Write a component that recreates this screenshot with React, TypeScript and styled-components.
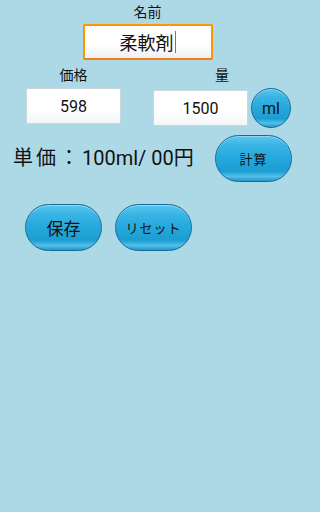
import React from "react";
import styled, { createGlobalStyle } from "styled-components";

const GlobalStyle = createGlobalStyle`
  html, body {
    margin: 0;
    padding: 0;
    background: #add8e6;
  }
  body {
    font-family: Roboto, "Noto Sans CJK JP", sans-serif;
    color: #111;
  }
`;

const Screen = styled.div`
  width: 295px;
  height: 512px;
  background: #add8e6;
  display: flex;
  flex-direction: column;
`;

const NameSection = styled.div`
  display: flex;
  flex-direction: column;
  align-items: center;
  padding-top: 3px;
`;

const Label = styled.div`
  font-size: 14px;
  line-height: 18px;
  text-align: center;
  color: #111;
`;

const NameBox = styled.div`
  margin-top: 3px;
  width: 130px;
  height: 36px;
  box-sizing: border-box;
  border: 2px solid #ff9500;
  border-bottom-color: #f0801a;
  border-radius: 2px;
  background: linear-gradient(#ffffff 60%, #eef0f3);
  display: flex;
  align-items: center;
  justify-content: center;
  font-size: 18px;
`;

const Caret = styled.span`
  display: inline-block;
  width: 1px;
  height: 22px;
  margin-left: 1px;
  background: #777;
`;

const FieldRow = styled.div`
  display: flex;
  padding-left: 26px;
  margin-top: 6px;
  gap: 32px;
`;

const FieldColumn = styled.div`
  display: flex;
  flex-direction: column;
  align-items: center;
  gap: 4px;
`;

const InputLine = styled.div`
  display: flex;
  align-items: center;
  gap: 3px;
`;

const NumberBox = styled.div`
  width: 95px;
  height: 36px;
  box-sizing: border-box;
  border: 1px solid #c9d6dc;
  background: linear-gradient(#ffffff 60%, #f3f5f7);
  display: flex;
  align-items: center;
  justify-content: center;
  font-size: 16px;
`;

const glossy = `
  box-sizing: border-box;
  border: 1px solid #146c9a;
  background:
    linear-gradient(
      #5cc6ee 0%,
      #39b5e5 20%,
      #25a8dc 50%,
      #1c9dd2 78%,
      #52bfe8 90%,
      #2496c8 100%
    );
  box-shadow: inset 0 1px 0 rgba(255, 255, 255, 0.35);
  display: flex;
  align-items: center;
  justify-content: center;
  color: #111;
  font-family: Roboto, "Noto Sans CJK JP", sans-serif;
  padding: 0;
`;

const RoundButton = styled.button`
  ${glossy}
  width: 40px;
  height: 40px;
  border-radius: 50%;
  font-size: 16px;
`;

const PillButton = styled.button<{ $size: number }>`
  ${glossy}
  width: 77px;
  height: 47px;
  border-radius: 24px;
  font-size: ${(p) => p.$size}px;
  letter-spacing: ${(p) => (p.$size < 15 ? "1px" : "0")};
`;

const ResultRow = styled.div`
  display: flex;
  align-items: center;
  justify-content: space-between;
  padding: 0 3px 0 13px;
  margin-top: 7px;
`;

const ResultText = styled.div`
  font-size: 20px;
  padding-bottom: 4px;
`;

const Wide = styled.span`
  letter-spacing: 3px;
`;

const ActionRow = styled.div`
  display: flex;
  gap: 13px;
  padding-left: 25px;
  margin-top: 22px;
`;

export default function App() {
  return (
    <>
      <GlobalStyle />
      <Screen>
        <NameSection>
          <Label>名前</Label>
          <NameBox>
            柔軟剤
            <Caret />
          </NameBox>
        </NameSection>
        <FieldRow>
          <FieldColumn>
            <Label>価格</Label>
            <NumberBox>598</NumberBox>
          </FieldColumn>
          <FieldColumn>
            <Label>量</Label>
            <InputLine>
              <NumberBox>1500</NumberBox>
              <RoundButton>ml</RoundButton>
            </InputLine>
          </FieldColumn>
        </FieldRow>
        <ResultRow>
          <ResultText>
            <Wide>単価：</Wide>100ml/ 00<Wide>円</Wide>
          </ResultText>
          <PillButton $size={13}>計算</PillButton>
        </ResultRow>
        <ActionRow>
          <PillButton $size={17}>保存</PillButton>
          <PillButton $size={13}>リセット</PillButton>
        </ActionRow>
      </Screen>
    </>
  );
}
